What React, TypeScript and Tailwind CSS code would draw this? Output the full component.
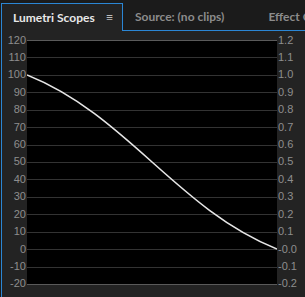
import React from 'react'

const leftLabels = ['120', '110', '100', '90', '80', '70', '60', '50', '40', '30', '20', '10', '0', '-10', '-20']
const rightLabels = ['1.2', '1.1', '1.0', '0.9', '0.8', '0.7', '0.6', '0.5', '0.4', '0.3', '0.2', '0.1', '-0.0', '-0.1', '-0.2']

const step = 244 / 14

function Plot() {
  return (
    <svg width="250" height="245" viewBox="0 0 250 245" className="block shrink-0">
      <rect x="0" y="0" width="250" height="245" fill="#000" />
      {leftLabels.map((_, i) => {
        const y = Math.round(i * step) + 0.5
        const edge = i === 0 || i === leftLabels.length - 1
        return <line key={i} x1="0" x2="250" y1={y} y2={y} stroke={edge ? '#5a5a5a' : '#333'} strokeWidth="1" />
      })}
      <path d="M0,35 C100,75 150,169 250,209" fill="none" stroke="#e6e6e6" strokeWidth="1.6" />
    </svg>
  )
}

function Labels({ items, align }: { items: string[]; align: 'left' | 'right' }) {
  return (
    <div className={`flex h-[244px] flex-col justify-between ${align === 'left' ? 'w-[25px] items-end pr-[1px]' : 'flex-1 items-start pl-[1px]'}`}>
      {items.map((l) => (
        <div key={l} className="flex h-0 items-center text-[11px] leading-none text-[#8e8e8e]">
          {l}
        </div>
      ))}
    </div>
  )
}

export default function App() {
  return (
    <div className="flex h-[297px] w-[305px] flex-col overflow-hidden bg-[#1b1b1b]" style={{ fontFamily: '"Liberation Sans", Arial, sans-serif' }}>
      {/* Tabs */}
      <div className="flex h-[31px] shrink-0 pt-[3px] text-[12px] font-bold whitespace-nowrap" style={{ fontFamily: 'Lato, "Open Sans", sans-serif' }}>
        <div className="ml-[1px] flex w-[122px] shrink-0 items-center border-l border-r border-t border-[#2b86d4] bg-[#232323] pl-[11px] text-[#e8e8e8]">
          <span>Lumetri Scopes</span>
          <span className="ml-[11px] text-[13px] font-normal text-[#bbbbbb]">≡</span>
        </div>
        <div className="flex min-w-0 flex-1 items-center gap-[44px] overflow-hidden border-b border-[#2b86d4] pl-[12px] text-[#8c8c8c]">
          <span>Source: (no clips)</span>
          <span>Effect Controls</span>
        </div>
      </div>

      {/* Panel */}
      <div className="ml-[1px] flex flex-1 border-l border-[#2b86d4] bg-[#232323] pt-[9px]">
        <div className="flex h-[245px] w-full items-start">
          <Labels items={leftLabels} align="left" />
          <Plot />
          <Labels items={rightLabels} align="right" />
        </div>
      </div>
    </div>
  )
}
